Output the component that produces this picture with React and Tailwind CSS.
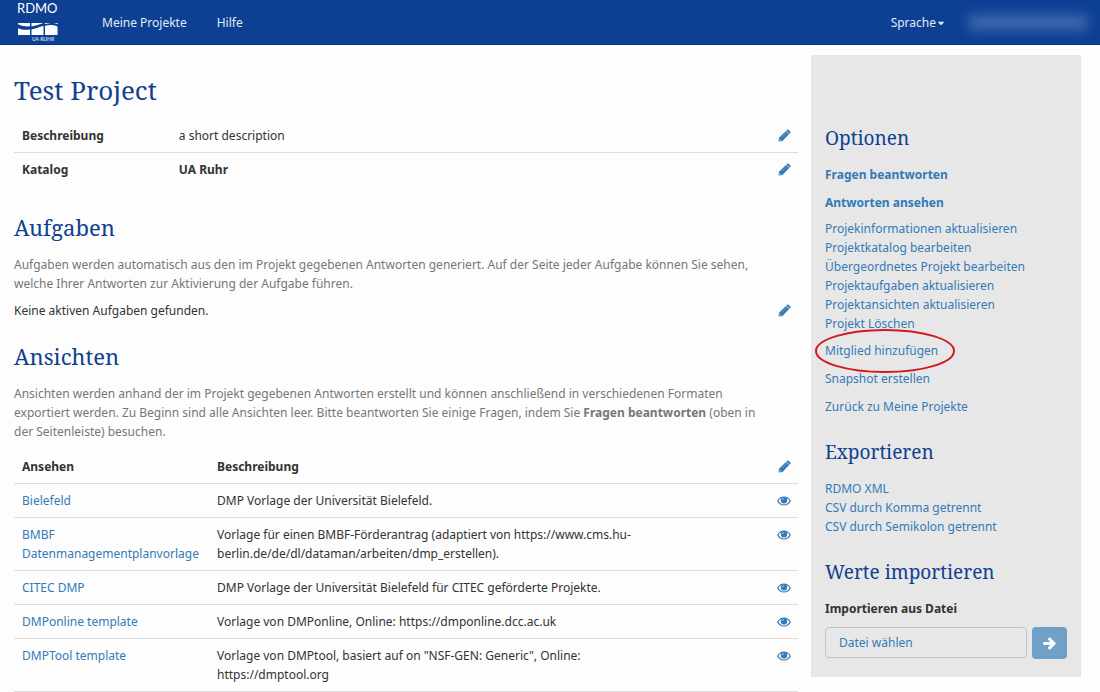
import React from "react";
import { FaArrowRight, FaCaretDown } from "react-icons/fa";

const PROJECT_LINKS = [
  "Projekinformationen aktualisieren",
  "Projektkatalog bearbeiten",
  "Übergeordnetes Projekt bearbeiten",
  "Projektaufgaben aktualisieren",
  "Projektansichten aktualisieren",
  "Projekt Löschen",
];

const EXPORT_LINKS = [
  "RDMO XML",
  "CSV durch Komma getrennt",
  "CSV durch Semikolon getrennt",
];

const VIEWS = [
  { title: "Bielefeld", text: "DMP Vorlage der Universität Bielefeld." },
  {
    title: "BMBF Datenmanagementplanvorlage",
    text: "Vorlage für einen BMBF-Förderantrag (adaptiert von https://www.cms.hu-berlin.de/de/dl/dataman/arbeiten/dmp_erstellen).",
  },
  {
    title: "CITEC DMP",
    text: "DMP Vorlage der Universität Bielefeld für CITEC geförderte Projekte.",
  },
  {
    title: "DMPonline template",
    text: "Vorlage von DMPonline, Online: https://dmponline.dcc.ac.uk",
  },
  {
    title: "DMPTool template",
    text: 'Vorlage von DMPtool, basiert auf on "NSF-GEN: Generic", Online: https://dmptool.org',
  },
];

const PencilIcon = () => (
  <svg viewBox="0 0 14 14" className="w-[13px] h-[13px]" fill="currentColor" aria-hidden="true">
    <path d="M9.800.9a1.200 1.200 0 0 1 1.700 0l1.700 1.700a1.200 1.200 0 0 1 0 1.700l-.8.8-3.400-3.400z" />
    <path d="M8.600 2.100l3.400 3.400-7.200 7.400L.6 13.400l.5-4.100z" />
    <path d="M1.900 10.900l1.300 1.300-1.200.3-.4-.4z" fill="#fff" />
    <path d="M8.700 4.300L4.200 8.800" stroke="#8db8dc" strokeWidth=".6" />
  </svg>
);

const EyeIcon = () => (
  <svg viewBox="0 0 14 10" className="w-[14px] h-[10px]" aria-hidden="true">
    <path
      d="M.7 5C2.200 2.400 4.400 1 7 1s4.800 1.400 6.300 4C11.800 7.600 9.600 9 7 9S2.200 7.600.7 5z"
      fill="none"
      stroke="currentColor"
      strokeWidth="1.2"
    />
    <circle cx="7" cy="4.200" r="3.200" fill="currentColor" />
    <path d="M5.400 4c0-.8.500-1.400 1.300-1.400" fill="none" stroke="#fff" strokeWidth=".7" />
  </svg>
);

const Logo = () => (
  <svg viewBox="0 0 42 42" className="w-[42px] h-[42px]" aria-label="RDMO UA Ruhr">
    <text x="0" y="13" fontSize="13" fontFamily="Lato, sans-serif" fill="#fff">
      RDMO
    </text>
    <g fill="#fff">
      <path d="M1 23h12v3.300C9 26.800 5 25.900 1 24.200z" />
      <path d="M14.500 23h12c-4 1.300-8 2.600-12 3.400z" />
      <path d="M28 23h6c-2 .2-4 .6-6 1.100zM37 23h3.500v1.200c-1.100-.6-2.300-1-3.500-1.200z" />
      <path d="M1 28.200c4 1.600 8 1.900 12 1.300V35H1z" />
      <path d="M14.500 29.400c4-.9 8-2.500 12-3.700V35h-12z" />
      <path d="M28 25.800c4.300-1.200 8.500-1.200 12.500.6V35H28z" />
    </g>
    <text x="15" y="41" fontSize="5" fontWeight="bold" fontFamily="Lato, sans-serif" fill="#c9d6ec">
      UA RUHR
    </text>
  </svg>
);

const Link = ({ children, className = "" }) => (
  <a href="#" className={`text-[#337ab7] hover:underline ${className}`}>
    {children}
  </a>
);

const Heading = ({ children, className = "" }) => (
  <h2
    className={`font-['Droid_Serif','Noto_Serif','DejaVu_Serif',serif] text-[#10418f] ${className}`}
  >
    {children}
  </h2>
);

const EditButton = ({ label }) => (
  <button type="button" aria-label={label} className="align-middle text-[#337ab7]">
    <PencilIcon />
  </button>
);

const Navbar = () => (
  <nav className="flex items-start h-[45px] pl-[17px] pr-3 bg-[#0d4093] border-b border-[#0a3274] text-[#e3eaf6]">
    <a href="#">
      <Logo />
    </a>
    <div className="flex gap-[30px] ml-[43px] pt-[13px]">
      <a href="#">Meine Projekte</a>
      <a href="#">Hilfe</a>
    </div>
    <div className="flex items-center gap-[22px] ml-auto pt-[13px]">
      <button type="button" className="flex items-center">
        Sprache
        <FaCaretDown className="text-[10px]" />
      </button>
      <button type="button" aria-label="Konto" className="flex items-center w-[120px] h-[19px] blur-[6px]">
        <span className="w-full h-[15px] rounded bg-[#4068ae]" />
      </button>
    </div>
  </nav>
);

const ProjectTable = () => (
  <table className="w-full table-fixed mt-[13px]">
    <tbody>
      <tr className="border-b border-[#dddddd]">
        <th className="w-1/5 px-2 py-[7px] text-left">Beschreibung</th>
        <td className="px-2 py-[7px]">a short description</td>
        <td className="w-10 p-[7px] text-right leading-none">
          <EditButton label="Beschreibung bearbeiten" />
        </td>
      </tr>
      <tr>
        <th className="px-2 py-[7px] text-left">Katalog</th>
        <td className="px-2 py-[7px] font-bold">UA Ruhr</td>
        <td className="p-[7px] text-right leading-none">
          <EditButton label="Katalog bearbeiten" />
        </td>
      </tr>
    </tbody>
  </table>
);

const ViewsTable = () => (
  <table className="w-full table-fixed mt-[9px]">
    <thead>
      <tr className="border-b border-[#dddddd] text-left">
        <th className="w-1/4 px-2 py-[7px]">Ansehen</th>
        <th className="w-[55%] p-[7px]">Beschreibung</th>
        <th className="p-[7px] text-right leading-none">
          <EditButton label="Ansichten bearbeiten" />
        </th>
      </tr>
    </thead>
    <tbody>
      {VIEWS.map((view) => (
        <tr key={view.title} className="border-b border-[#dddddd] align-top">
          <td className="px-2 py-[7px]">
            <Link>{view.title}</Link>
          </td>
          <td className="p-[7px]">{view.text}</td>
          <td className="p-[7px]">
            <a
              href="#"
              aria-label={`${view.title} ansehen`}
              className="flex justify-end items-center h-[19px] text-[#337ab7]"
            >
              <EyeIcon />
            </a>
          </td>
        </tr>
      ))}
    </tbody>
  </table>
);

const Sidebar = () => (
  <aside className="w-[270px] shrink-0 self-start bg-[#e7e7e7] px-[14px] pt-[68px] pb-[18px]">
    <Heading className="text-[19px] leading-[30px]">Optionen</Heading>
    <ul className="mt-3 space-y-[9px] font-bold">
      <li><Link>Fragen beantworten</Link></li>
      <li><Link>Antworten ansehen</Link></li>
    </ul>
    <ul className="mt-[7px]">
      {PROJECT_LINKS.map((label) => (
        <li key={label}><Link>{label}</Link></li>
      ))}
    </ul>
    <ul className="mt-2 space-y-[9px]">
      <li>
        <span className="relative inline-block">
          <Link>Mitglied hinzufügen</Link>
          <svg
            viewBox="0 0 140 44"
            preserveAspectRatio="none"
            className="absolute -left-[10px] -top-3 w-[140px] h-[44px] max-w-none pointer-events-none"
            aria-hidden="true"
          >
            <ellipse cx="70" cy="22" rx="69" ry="21" fill="none" stroke="#d3191f" strokeWidth="2" />
          </svg>
        </span>
      </li>
      <li><Link>Snapshot erstellen</Link></li>
      <li><Link>Zurück zu Meine Projekte</Link></li>
    </ul>

    <Heading className="mt-[21px] text-[19px] leading-[30px]">Exportieren</Heading>
    <ul className="mt-3">
      {EXPORT_LINKS.map((label) => (
        <li key={label}><Link>{label}</Link></li>
      ))}
    </ul>

    <Heading className="mt-[21px] text-[19px] leading-[30px]">Werte importieren</Heading>
    <form className="mt-3" onSubmit={(e) => e.preventDefault()}>
      <label htmlFor="import-file" className="block font-bold">
        Importieren aus Datei
      </label>
      <div className="flex gap-[5px] mt-[9px]">
        <label
          htmlFor="import-file"
          className="flex-1 flex items-center h-[31px] px-[13px] border border-[#c4c4c4] rounded text-[#337ab7] cursor-pointer"
        >
          Datei wählen
        </label>
        <input id="import-file" type="file" className="sr-only" />
        <button
          type="submit"
          aria-label="Importieren"
          className="flex items-center justify-center w-[35px] h-8 rounded bg-[#70a0c8] text-white"
        >
          <FaArrowRight className="text-[13px]" stroke="currentColor" strokeWidth="40" />
        </button>
      </div>
    </form>
  </aside>
);

export default function App() {
  return (
    <div className="min-h-screen bg-[#fdfdfd] font-['Droid_Sans','Noto_Sans',sans-serif] text-[12px] leading-[19px] text-[#333333]">
      <Navbar />
      <div className="flex gap-[13px] pl-[14px] pr-[19px] pt-[10px]">
        <main className="flex-1 min-w-0 pt-[19px]">
          <h1 className="font-['Droid_Serif','Noto_Serif','DejaVu_Serif',serif] text-[26px] leading-[32px] text-[#10418f]">
            Test Project
          </h1>
          <ProjectTable />

          <Heading className="mt-[26px] text-[22px] leading-[30px]">Aufgaben</Heading>
          <p className="mt-[13px] pr-6 text-[#777777]">
            Aufgaben werden automatisch aus den im Projekt gegebenen Antworten generiert. Auf der
            Seite jeder Aufgabe können Sie sehen, welche Ihrer Antworten zur Aktivierung der Aufgabe
            führen.
          </p>
          <div className="flex justify-between items-center mt-2 pr-[7px]">
            <p>Keine aktiven Aufgaben gefunden.</p>
            <EditButton label="Aufgaben bearbeiten" />
          </div>

          <Heading className="mt-[21px] text-[22px] leading-[30px]">Ansichten</Heading>
          <p className="mt-[13px] pr-6 text-[#777777]">
            Ansichten werden anhand der im Projekt gegebenen Antworten erstellt und können
            anschließend in verschiedenen Formaten exportiert werden. Zu Beginn sind alle Ansichten
            leer. Bitte beantworten Sie einige Fragen, indem Sie <strong>Fragen beantworten</strong>{" "}
            (oben in der Seitenleiste) besuchen.
          </p>
          <ViewsTable />
        </main>
        <Sidebar />
      </div>
    </div>
  );
}
